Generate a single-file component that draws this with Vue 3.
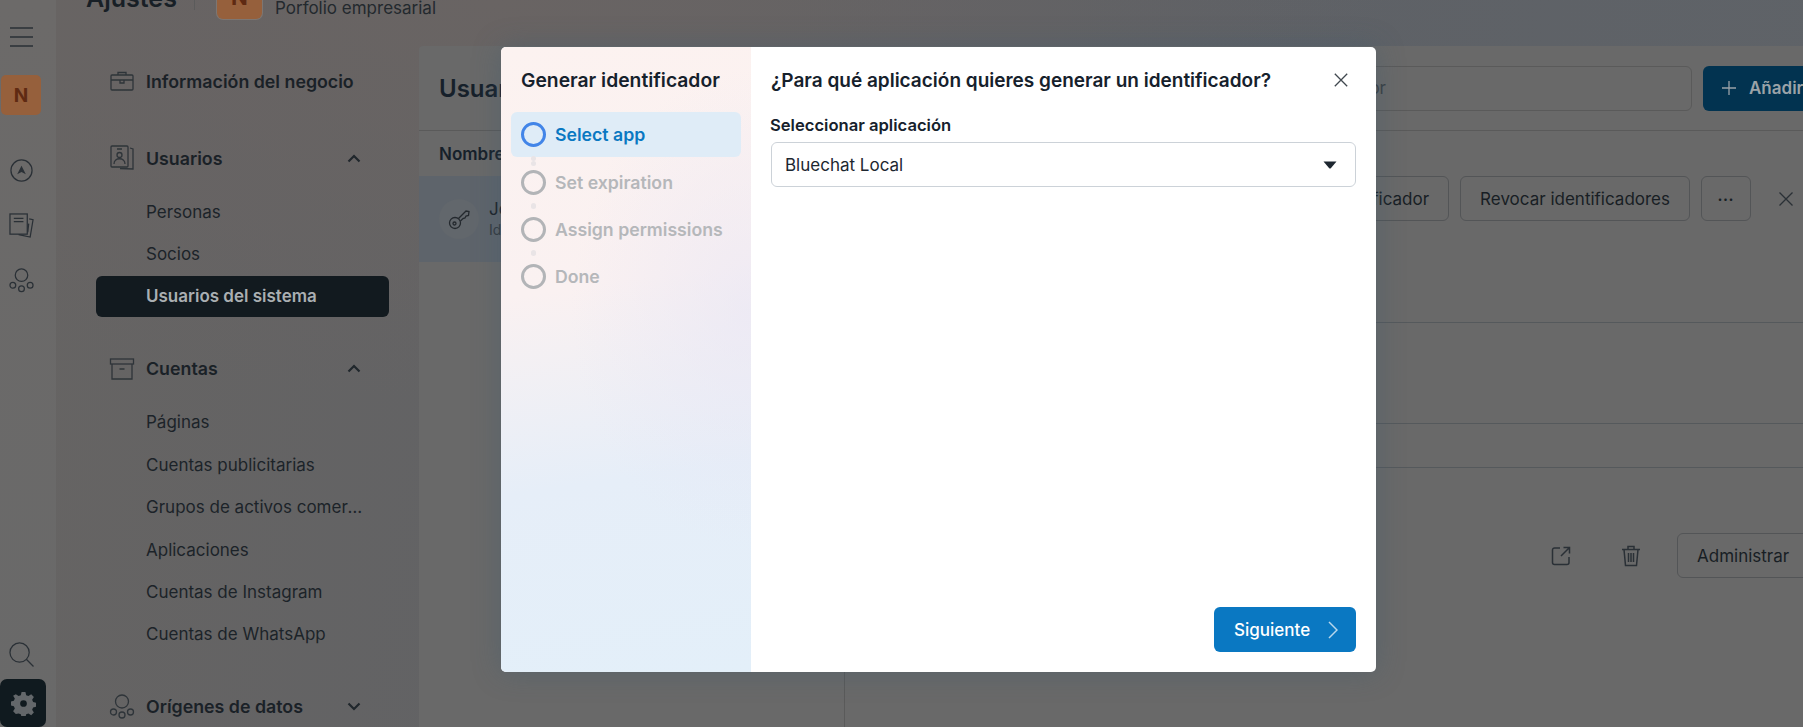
<script setup>
const subsA = ['Personas', 'Socios', 'Usuarios del sistema']
const subsB = ['Páginas', 'Cuentas publicitarias', 'Grupos de activos comerciales', 'Aplicaciones', 'Cuentas de Instagram', 'Cuentas de WhatsApp']
const steps = ['Select app', 'Set expiration', 'Assign permissions', 'Done']
</script>

<template>
  <div class="page">
    <aside class="rail">
      <svg class="burger" width="23" height="20" viewBox="0 0 23 20"><path d="M0 1h23M0 10h23M0 19h23" /></svg>
      <div class="tile">N</div>
      <svg class="ri first" width="23" height="23" viewBox="0 0 24 24"><circle cx="12" cy="12" r="11"/><path class="fill" d="M12 7l4.500 9-4.500-2.500L7.500 16z"/></svg>
      <svg class="ri doc" width="25" height="25" viewBox="0 0 26 26"><rect x="1" y="1" width="18" height="21"/><path d="M5 5.500h10M5 9h10M21 6l4 1-3 18-12-2.500M20.500 11l-1 9"/></svg>
      <svg class="ri" width="25" height="25" viewBox="0 0 26 26"><circle cx="13" cy="7.500" r="6.500"/><circle cx="4" cy="18" r="3"/><circle cx="13" cy="21.500" r="3"/><circle cx="22" cy="18" r="3"/></svg>
      <div class="rail-space"></div>
      <svg class="ri search" width="25" height="25" viewBox="0 0 26 26"><circle cx="11" cy="11" r="10"/><path d="M18 18l7.500 7.500"/></svg>
      <div class="gear">
        <svg width="25" height="25" viewBox="0 0 26 26"><path class="gearfill" fill-rule="evenodd" d="M11 1h4l.8 3.300 2.300 1 2.900-1.800 2.800 2.800-1.800 2.900 1 2.300 3 .8v4l-3 .8-1 2.300 1.800 2.900-2.800 2.800-2.900-1.800-2.300 1-.8 3h-4l-.8-3-2.300-1L5 23.800 2.200 21l1.800-2.900-1-2.300-3-.8v-4l3-.8 1-2.300-1.800-2.900L5 3.500l2.900 1.800 2.300-1zM13 9.500a3.500 3.500 0 1 0 0 7 3.500 3.500 0 0 0 0-7z"/></svg>
      </div>
    </aside>

    <div class="shell">
      <header class="top">
        <span class="ajustes">Ajustes</span>
        <span class="sep"></span>
        <span class="biz">N</span>
        <span class="bizname">Porfolio empresarial</span>
      </header>

      <div class="body">
        <nav class="side">
          <div class="head info">
            <svg width="24" height="20" viewBox="0 0 24 20"><rect x="1" y="4" width="22" height="15" rx="1"/><path d="M8 4V1.500h8V4M1 9h22M10 9v3h4V9"/></svg>
            <span>Información del negocio</span>
          </div>
          <div class="head">
            <svg width="24" height="26" viewBox="0 0 24 26"><rect x="1" y="1" width="17" height="21" rx="1"/><circle cx="9.500" cy="10" r="2.500"/><path d="M4 19c0-7 11-7 11 0M7 4h5M20 3l3 1v20l-13-.500"/></svg>
            <span>Usuarios</span>
            <svg class="chev" width="14" height="9" viewBox="0 0 14 9"><path d="M1.500 7.500L7 2l5.500 5.500"/></svg>
          </div>
          <ul class="subs">
            <li v-for="s in subsA" :key="s" :class="{ on: s === 'Usuarios del sistema' }"><span>{{ s }}</span></li>
          </ul>
          <div class="head group">
            <svg width="25" height="22" viewBox="0 0 25 22"><rect x="1" y="1" width="23" height="5"/><path d="M2.500 6v15h20V6M10 11h5"/></svg>
            <span>Cuentas</span>
            <svg class="chev" width="14" height="9" viewBox="0 0 14 9"><path d="M1.500 7.500L7 2l5.500 5.500"/></svg>
          </div>
          <ul class="subs">
            <li v-for="s in subsB" :key="s"><span>{{ s }}</span></li>
          </ul>
          <div class="head group">
            <svg width="26" height="26" viewBox="0 0 26 26"><circle cx="13" cy="7.500" r="6.500"/><circle cx="4.500" cy="18" r="3"/><circle cx="13" cy="21" r="3"/><circle cx="21.500" cy="18" r="3"/></svg>
            <span>Orígenes de datos</span>
            <svg class="chev" width="14" height="9" viewBox="0 0 14 9"><path d="M1.500 1.500L7 7l5.500-5.500"/></svg>
          </div>
        </nav>

        <main class="main">
          <div class="bar">
            <h2>Usuarios del sistema</h2>
            <div class="searchbox">Buscar por nombre o identificador</div>
            <button class="add"><svg width="16" height="16" viewBox="0 0 16 16"><path d="M8 1v14M1 8h14"/></svg>Añadir</button>
          </div>
          <div class="cols">
            <section class="list">
              <div class="list-title">Nombre</div>
              <div class="row">
                <span class="avatar">
                  <svg width="22" height="22" viewBox="0 0 22 22"><circle cx="7" cy="15" r="5.500"/><circle cx="6.500" cy="15.500" r="1.500"/><path d="M10.500 10.500L18 3l3 .500-.500 4-2.500.500-1 2-2 .5-2.500 2.500"/></svg>
                </span>
                <div class="who">
                  <div class="w1">Jose</div>
                  <div class="w2">Identificador</div>
                </div>
              </div>
            </section>
            <section class="detail">
              <div class="actions">
                <button class="ghost">Generar identificador</button>
                <button class="ghost">Revocar identificadores</button>
                <button class="ghost more">•••</button>
                <svg class="xx" width="16" height="16" viewBox="0 0 16 16"><path d="M1.500 1.500l13 13M14.500 1.500l-13 13"/></svg>
              </div>
              <div class="rule r1"></div>
              <div class="rule r2"></div>
              <div class="rule r3"></div>
              <div class="asset">
                <svg width="20" height="20" viewBox="0 0 20 20"><path d="M9 2H3.500A2 2 0 0 0 1.500 4v12.500a2 2 0 0 0 2 2H16a2 2 0 0 0 2-2V11M12.500 1.500H18.500V7.500M18 2l-8 8"/></svg>
                <svg width="20" height="22" viewBox="0 0 20 22"><path d="M1 4.500h18M7 4.500V1.500h6v3M3 4.500l1.500 16h11l1.500-16M7.500 8v9M10 8v9M12.500 8v9"/></svg>
                <button class="ghost admin">Administrar</button>
              </div>
            </section>
          </div>
        </main>
      </div>
    </div>

    <div class="modal">
      <aside class="wizard">
        <h3>Generar identificador</h3>
        <div class="steps">
          <div v-for="(s, i) in steps" :key="s" class="step" :class="{ active: i === 0 }">
            <i v-if="i > 0" class="dot up"></i>
            <span class="ring"></span>
            <span>{{ s }}</span>
            <i v-if="i < 3" class="dot down"></i>
          </div>
        </div>
      </aside>
      <section class="pane">
        <div class="pane-head">
          <h3>¿Para qué aplicación quieres generar un identificador?</h3>
          <svg width="14" height="14" viewBox="0 0 14 14"><path d="M.8.8l12.400 12.400M13.200.8L.8 13.200"/></svg>
        </div>
        <label>Seleccionar aplicación</label>
        <div class="select">
          <span>Bluechat Local</span>
          <svg width="14" height="8" viewBox="0 0 14 8"><path d="M.5.500h13L8 7a1.400 1.400 0 0 1-2 0z"/></svg>
        </div>
        <div class="foot">
          <button class="next">Siguiente
            <svg width="10" height="18" viewBox="0 0 10 18"><path d="M1 1l8 8-8 8"/></svg>
          </button>
        </div>
      </section>
    </div>
  </div>
</template>

<style>
html, body { margin: 0; background: #696969; }
</style>

<style scoped>
* { box-sizing: border-box; }
.page {
  position: relative; display: flex; width: 1803px; height: 727px; overflow: hidden;
  font-family: Inter, "Noto Sans", sans-serif; color: #1a2127; font-size: 17px;
  background: #6a6a6a;
}
svg { fill: none; stroke: currentColor; stroke-width: 1.3; flex: none; }
button { font: inherit; }
.rail { width: 56px; flex: none; display: flex; flex-direction: column; align-items: flex-start; padding-top: 27px; background: linear-gradient(#6c6a69, #696969); color: #2a3036; }
.burger { stroke-width: 1.6; margin-left: 10px; }
.tile { width: 40px; height: 40px; margin: 28px 0 0 1px; border-radius: 5px; background: #96603c; color: #5f2a12; font-weight: 700; font-size: 19px; display: flex; align-items: center; justify-content: center; }
.ri { margin: 30px 0 0 9px; }
.ri.first { margin: 44px 0 0 10px; }
.ri.doc { margin-top: 31px; }
.fill { fill: currentColor; stroke: none; }
.rail-space { flex: 1; }
.search { margin-bottom: 12px; margin-top: 0; }
.gear { width: 46px; height: 48px; border-radius: 7px; background: #101a1f; display: flex; align-items: center; justify-content: center; }
.gearfill { fill: #63676a; stroke: none; }
.shell { flex: 1; min-width: 0; display: flex; flex-direction: column; background: radial-gradient(900px 400px at 25% 0, #696463, transparent), linear-gradient(100deg, #666463, #5e6166 60%, #5f6368); }
.top { height: 46px; flex: none; position: relative; overflow: hidden; }
.ajustes { position: absolute; left: 30px; top: -17px; font-size: 25px; font-weight: 600; color: #181f26; }
.sep { position: absolute; left: 138px; top: 0; width: 1px; height: 10px; background: #5b5b5b; }
.biz { position: absolute; left: 161px; top: -26px; width: 45px; height: 45px; border-radius: 6px; background: #96603c; color: #5f2a12; font-weight: 700; font-size: 22px; display: flex; align-items: center; justify-content: center; box-shadow: 0 0 0 1px #7d7672; }
.bizname { position: absolute; left: 219px; top: -2px; color: #23292e; }
.body { flex: 1; min-height: 0; display: flex; }
.side { width: 363px; flex: none; padding: 14px 30px 0 40px; }
.head { height: 42px; display: flex; align-items: center; font-size: 17.800px; font-weight: 600; padding: 0 28px 0 14px; color: #1a2127; }
.head > svg:first-child { width: 26px; margin-right: 11px; margin-left: -1px; color: #2e3439; }
.head > span { flex: 1; white-space: nowrap; }
.head .chev { color: #20272c; stroke-width: 2.200; }
.info { margin-bottom: 35px; }
.group { margin-top: 30px; }
.subs { list-style: none; margin: 11.500px 0 0; padding: 0; }
.subs li { height: 42.4px; display: flex; align-items: center; padding: 0 22px 0 50px; color: #1c2329; }
.subs li span { overflow: hidden; white-space: nowrap; text-overflow: ellipsis; }
.subs li.on { position: relative; font-weight: 600; color: #aaafb2; }
.subs li.on::before { content: ""; position: absolute; inset: 1px 0; border-radius: 6px; background: #121a1f; }
.subs li.on span { position: relative; }
.main { width: 1434px; flex: none; background: #696969; border-top-left-radius: 4px; display: flex; flex-direction: column; }
.bar { height: 85px; flex: none; display: flex; align-items: center; gap: 11px; padding: 0 0 0 20px; border-bottom: 1px solid #5a5a5a; }
.bar h2 { margin: 0; font-size: 24px; font-weight: 600; white-space: nowrap; color: #16202a; }
.searchbox { flex: 1; height: 45px; margin-left: 30px; border: 1px solid #5a5a5a; border-radius: 6px; padding: 0 305px 0 16px; display: flex; align-items: center; justify-content: flex-end; color: #3a3f43; white-space: nowrap; }
.add { flex: none; width: 150px; height: 45px; padding: 0 0 0 18px; display: flex; align-items: center; gap: 12px; border: 0; border-radius: 6px; background: #023350; color: #9ba3a8; font-weight: 600; }
.cols { flex: 1; min-height: 0; display: flex; }
.list { width: 426px; flex: none; border-right: 1px solid #5a5a5a; }
.list-title { height: 45px; display: flex; align-items: center; padding-left: 20px; font-weight: 600; color: #16202a; }
.row { height: 86px; display: flex; align-items: center; gap: 10px; padding-left: 20px; background: #5e646b; }
.avatar { width: 40px; height: 40px; border-radius: 50%; background: #62676c; display: flex; align-items: center; justify-content: center; color: #24292e; }
.w1 { line-height: 22px; color: #1a2127; }
.w2 { font-size: 14px; line-height: 20px; color: #33393e; }
.detail { flex: 1; min-width: 0; padding: 45px 0 0; }
.actions { display: flex; align-items: center; justify-content: flex-end; gap: 11px; padding-right: 59px; height: 45px; }
.ghost { height: 45px; padding: 0 19px; background: transparent; border: 1px solid #535557; border-radius: 6px; color: #181e24; white-space: nowrap; flex: none; }
.more { width: 50px; padding: 0; font-size: 8px; letter-spacing: 1px; }
.xx { margin-left: 16px; color: #2a3036; }
.rule { height: 1px; background: #55595c; }
.r1 { margin-top: 101px; }
.r2 { margin-top: 100px; }
.r3 { margin-top: 43px; }
.asset { display: flex; align-items: center; margin-top: 65px; padding-left: 706px; color: #2a3036; gap: 50px; }
.asset > svg { stroke-width: 1.500; }
.admin { margin-left: -14px; width: 150px; padding: 0 19px; text-align: left; }

.modal { position: absolute; left: 501px; top: 47px; width: 875px; height: 625px; display: flex; border-radius: 5px; overflow: hidden; background: #fff; box-shadow: 0 0 28px rgba(60,90,110,.4); }
.wizard { width: 250px; flex: none; padding: 20px 10px 0; background: radial-gradient(180px 240px at 100% 42%, rgba(232,230,245,.6), transparent), linear-gradient(172deg, #fcf2f0 0%, #faf1f1 38%, #e6eef8 68%, #e3eff9 100%); }
.wizard h3 { margin: 0 0 0 10px; font-size: 19.300px; line-height: 26px; font-weight: 600; color: #16212c; white-space: nowrap; }
.steps { margin-top: 19px; }
.step { position: relative; height: 47px; display: flex; align-items: center; gap: 9px; padding-left: 10px; font-size: 17.700px; font-weight: 600; color: #b5b7ba; white-space: nowrap; }
.step.active { height: 45px; background: #dfecf7; border-radius: 6px; color: #0a78c2; margin-bottom: 2px; }
.ring { width: 25px; height: 25px; flex: none; border: 3px solid #b2b4b7; border-radius: 50%; }
.active .ring { border-color: #4285e8; }
.dot { position: absolute; left: 20px; width: 5px; height: 5px; border-radius: 50%; background: #e9e4e6; }
.dot.up { top: -3px; }
.dot.down { bottom: -3px; }
.active .dot.down { bottom: -9px; }
.pane { flex: 1; min-width: 0; display: flex; flex-direction: column; padding: 20px; }
.pane-head { display: flex; align-items: center; justify-content: space-between; height: 26px; color: #40484f; padding-right: 8px; }
.pane-head h3 { margin: 0; font-size: 19px; font-weight: 600; color: #16212c; white-space: nowrap; }
label { margin-top: 22px; font-size: 16.600px; line-height: 20px; font-weight: 600; color: #16212c; margin-left: -1px; }
.select { margin-top: 7px; height: 45px; display: flex; align-items: center; justify-content: space-between; padding: 0 18px 0 13px; border: 1px solid #ccd2d8; border-radius: 6px; color: #1d2730; }
.select svg { fill: #1d2730; stroke: none; }
.foot { margin-top: auto; display: flex; justify-content: flex-end; }
.next { width: 142px; height: 45px; border: 0; border-radius: 6px; background: #0a78c2; color: #fff; font-weight: 500; display: flex; align-items: center; justify-content: space-between; padding: 0 18px 0 20px; }
.next svg { color: #b8d7ec; stroke-width: 1.500; }
</style>
